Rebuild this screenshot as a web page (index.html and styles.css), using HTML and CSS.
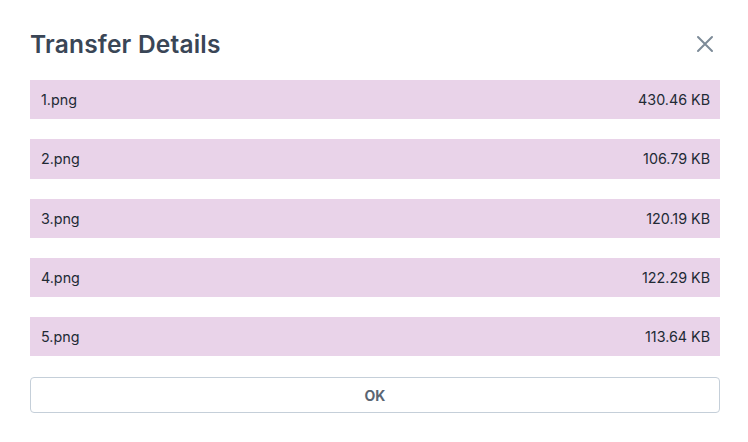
FILE: index.html
```html
<!DOCTYPE html>
<html>
<head>
<meta charset="utf-8">
<link rel="stylesheet" href="styles.css">
</head>
<body>
<div class="dialog">
  <div class="header">
    <h1 class="title">Transfer Details</h1>
    <button class="close" aria-label="Close">
      <svg width="18" height="18" viewBox="0 0 18 18"><path d="M2 2 L16 16 M16 2 L2 16" stroke="#7d8b98" stroke-width="2" stroke-linecap="round" fill="none"/></svg>
    </button>
  </div>
  <ul class="list">
    <li class="row"><span>1.png</span><span>430.46 KB</span></li>
    <li class="row"><span>2.png</span><span>106.79 KB</span></li>
    <li class="row"><span>3.png</span><span>120.19 KB</span></li>
    <li class="row"><span>4.png</span><span>122.29 KB</span></li>
    <li class="row"><span>5.png</span><span>113.64 KB</span></li>
  </ul>
  <button class="ok">OK</button>
</div>
</body>
</html>
```
FILE: styles.css
```css
* { box-sizing: border-box; }
html, body { margin: 0; padding: 0; background: #ffffff; }
body { font-family: Inter, "Noto Sans", "Liberation Sans", sans-serif; }
.dialog { width: 748px; height: 442px; padding: 28px 28px 0 30px; }
.header { display: flex; align-items: center; justify-content: space-between; height: 32px; }
.title { margin: 0; font-size: 24.5px; font-weight: 600; color: #3a4656; letter-spacing: 0.2px; }
.close { border: 0; background: none; padding: 0; margin-right: 6px; width: 18px; height: 18px; display: flex; cursor: pointer; }
.list { list-style: none; margin: 20px 0 0 0; padding: 0; width: 690px; display: flex; flex-direction: column; gap: 20px; }
.row { height: 39.3px; background: #e9d3e9; display: flex; align-items: center; justify-content: space-between; padding: 0 10px 0 11px; font-size: 14.3px; color: #222a35; }
.ok { margin-top: 21px; width: 690px; height: 36px; background: #fff; border: 1px solid #c5cfd9; border-radius: 4px; font-family: inherit; font-size: 14px; font-weight: 700; color: #5a6573; }
```
